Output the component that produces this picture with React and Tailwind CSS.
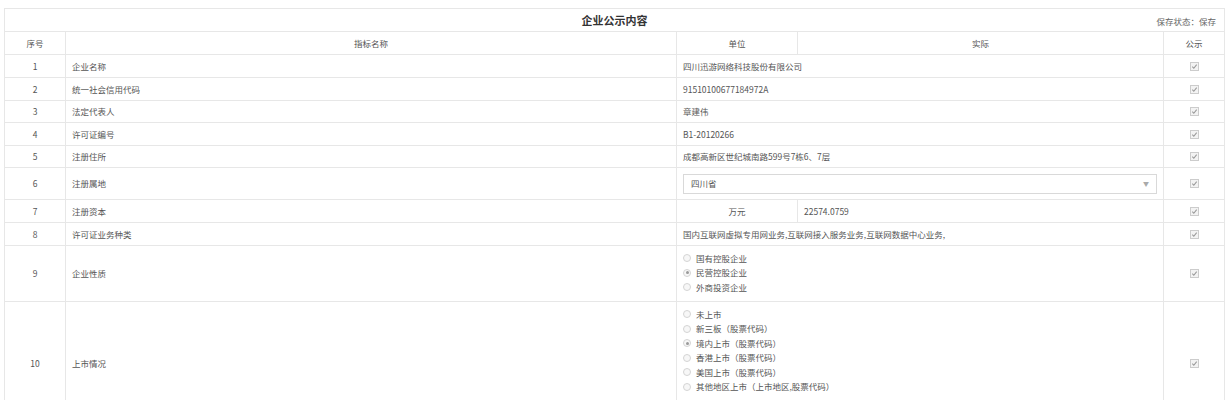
export default function App() {
  const f = { fontFamily: '"Noto Sans CJK SC", "Liberation Sans", sans-serif' };
  const Chk = () => (
    <span className="inline-flex w-[9px] h-[9px] border border-[#ccc] bg-[#f3f3f3] items-center justify-center">
      <svg width="7" height="7" viewBox="0 0 8 8"><path d="M1.5 4.2 L3.2 6 L6.5 1.8" stroke="#999" strokeWidth="1.2" fill="none" /></svg>
    </span>
  );
  const Radio = ({ on, label }) => (
    <div className="flex items-center gap-[5px] h-[14.5px]">
      <span className="w-[8px] h-[8px] rounded-full border border-[#d4d4d4] bg-[#f7f7f7] flex items-center justify-center">
        {on && <span className="w-[3px] h-[3px] rounded-full bg-[#999]" />}
      </span>
      <span>{label}</span>
    </div>
  );
  const td = "border border-[#e7e7e7] px-[6px]";
  const rows = [
    ["1", "企业名称", <td colSpan={2} className={td}>四川迅游网络科技股份有限公司</td>, 23],
    ["2", "统一社会信用代码", <td colSpan={2} className={td}>91510100677184972A</td>, 23],
    ["3", "法定代表人", <td colSpan={2} className={td}>章建伟</td>, 22],
    ["4", "许可证编号", <td colSpan={2} className={td}>B1-20120266</td>, 23],
    ["5", "注册住所", <td colSpan={2} className={td}>成都高新区世纪城南路599号7栋6、7层</td>, 22],
    ["6", "注册属地", <td colSpan={2} className={td}>
      <div className="h-[20px] border border-[#d9d9d9] flex items-center justify-between px-[7px]">
        <span>四川省</span><span className="text-[6px] text-[#aaa]">▼</span>
      </div></td>, 32],
    ["7", "注册资本", <><td className={td + " text-center"}>万元</td><td className={td}>22574.0759</td></>, 23],
    ["8", "许可证业务种类", <td colSpan={2} className={td}>国内互联网虚拟专用网业务,互联网接入服务业务,互联网数据中心业务,</td>, 23],
    ["9", "企业性质", <td colSpan={2} className={td + " pt-[5px] align-top"}>
      <Radio label="国有控股企业" /><Radio on label="民营控股企业" /><Radio label="外商投资企业" /></td>, 56],
    ["10", "上市情况", <td colSpan={2} className={td + " pt-[5px] align-top"}>
      <Radio label="未上市" /><Radio label="新三板（股票代码）" /><Radio on label="境内上市（股票代码）" />
      <Radio label="香港上市（股票代码）" /><Radio label="美国上市（股票代码）" /><Radio label="其他地区上市（上市地区,股票代码）" /></td>, 124],
  ];
  return (
    <div className="bg-white w-[1228px] h-[400px] overflow-hidden pt-[8px] pl-[4px]" style={f}>
      <table className="border-collapse table-fixed w-[1220px] text-[8.5px] text-[#555]">
        <colgroup>
          <col className="w-[61px]" /><col className="w-[611px]" /><col className="w-[121px]" /><col className="w-[366px]" /><col className="w-[61px]" />
        </colgroup>
        <tbody>
          <tr className="h-[23px]">
            <td colSpan={5} className="border border-[#e7e7e7] relative text-center">
              <span className="text-[11px] font-bold text-[#333]">企业公示内容</span>
              <span className="absolute right-[8px] bottom-[3px] text-[#666]">保存状态：保存</span>
            </td>
          </tr>
          <tr className="h-[23px] text-center">
            <td className={td}>序号</td><td className={td}>指标名称</td><td className={td}>单位</td><td className={td}>实际</td><td className={td}>公示</td>
          </tr>
          {rows.map(([n, name, cells, h]) => (
            <tr key={n} style={{ height: h }}>
              <td className={td + " text-center"}>{n}</td>
              <td className={td}>{name}</td>
              {cells}
              <td className={td + " text-center"}><Chk /></td>
            </tr>
          ))}
        </tbody>
      </table>
    </div>
  );
}
